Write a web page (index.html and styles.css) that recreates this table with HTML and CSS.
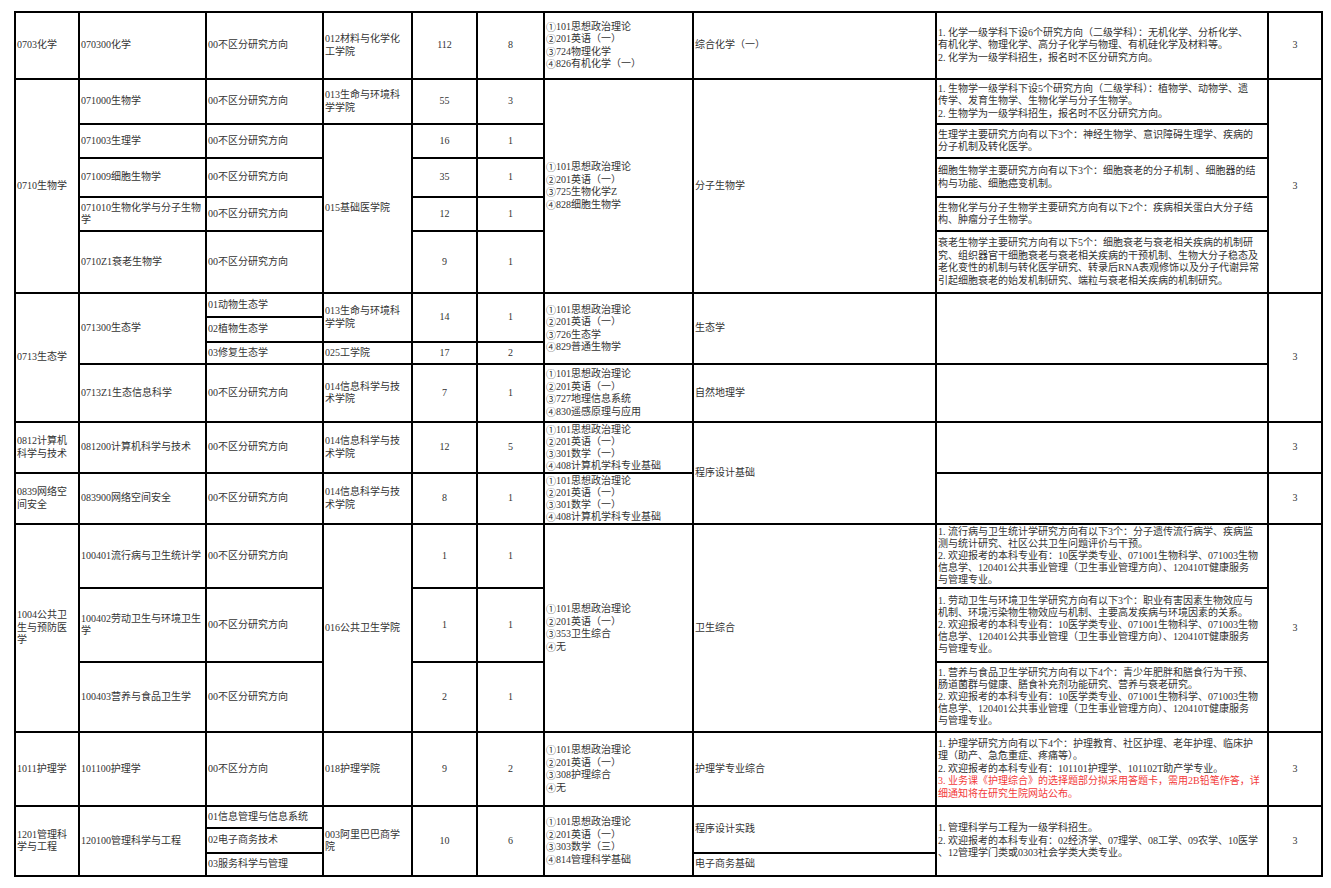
FILE: index.html
```html
<!DOCTYPE html>
<html lang="zh">
<head>
<meta charset="utf-8">
<title>招生目录</title>
<link rel="stylesheet" href="styles.css">
</head>
<body>
<table class="cat">
<colgroup>
<col class="w1"><col class="w2"><col class="w3"><col class="w4"><col class="w5"><col class="w6"><col class="w7"><col class="w8"><col class="w9"><col class="w10">
</colgroup>
<tbody>
<tr class="h1">
<td>0703化学</td>
<td>070300化学</td>
<td>00不区分研究方向</td>
<td>012材料与化学化<br>工学院</td>
<td class="c">112</td>
<td class="c">8</td>
<td><span class="n">①</span>101思想政治理论<br><span class="n">②</span>201英语（一）<br><span class="n">③</span>724物理化学<br><span class="n">④</span>826有机化学（一）</td>
<td>综合化学（一）</td>
<td class="rm">1. 化学一级学科下设6个研究方向（二级学科）：无机化学、分析化学、<br>有机化学、物理化学、高分子化学与物理、有机硅化学及材料等。<br>2. 化学为一级学科招生，报名时不区分研究方向。</td>
<td class="c">3</td>
</tr>
<tr class="h2">
<td rowspan="5">0710生物学</td>
<td>071000生物学</td>
<td>00不区分研究方向</td>
<td>013生命与环境科<br>学学院</td>
<td class="c">55</td>
<td class="c">3</td>
<td rowspan="5"><span class="n">①</span>101思想政治理论<br><span class="n">②</span>201英语（一）<br><span class="n">③</span>725生物化学Z<br><span class="n">④</span>828细胞生物学</td>
<td rowspan="5">分子生物学</td>
<td class="rm">1. 生物学一级学科下设5个研究方向（二级学科）：植物学、动物学、遗<br>传学、发育生物学、生物化学与分子生物学。<br>2. 生物学为一级学科招生，报名时不区分研究方向。</td>
<td class="c" rowspan="5">3</td>
</tr>
<tr class="h3">
<td>071003生理学</td>
<td>00不区分研究方向</td>
<td rowspan="4">015基础医学院</td>
<td class="c">16</td>
<td class="c">1</td>
<td class="rm">生理学主要研究方向有以下3个：神经生物学、意识障碍生理学、疾病的<br>分子机制及转化医学。</td>
</tr>
<tr class="h4">
<td>071009细胞生物学</td>
<td>00不区分研究方向</td>
<td class="c">35</td>
<td class="c">1</td>
<td class="rm">细胞生物学主要研究方向有以下3个：细胞衰老的分子机制 、细胞器的结<br>构与功能、细胞癌变机制。</td>
</tr>
<tr class="h5">
<td>071010生物化学与分子生物<br>学</td>
<td>00不区分研究方向</td>
<td class="c">12</td>
<td class="c">1</td>
<td class="rm">生物化学与分子生物学主要研究方向有以下2个：疾病相关蛋白大分子结<br>构、肿瘤分子生物学。</td>
</tr>
<tr class="h6">
<td>0710Z1衰老生物学</td>
<td>00不区分研究方向</td>
<td class="c">9</td>
<td class="c">1</td>
<td class="rm">衰老生物学主要研究方向有以下5个：细胞衰老与衰老相关疾病的机制研<br>究、组织器官干细胞衰老与衰老相关疾病的干预机制、生物大分子稳态及<br>老化变性的机制与转化医学研究、转录后RNA表观修饰以及分子代谢异常<br>引起细胞衰老的始发机制研究、端粒与衰老相关疾病的机制研究。</td>
</tr>
<tr class="h7">
<td rowspan="4">0713生态学</td>
<td rowspan="3">071300生态学</td>
<td>01动物生态学</td>
<td rowspan="2">013生命与环境科<br>学学院</td>
<td class="c" rowspan="2">14</td>
<td class="c" rowspan="2">1</td>
<td rowspan="3"><span class="n">①</span>101思想政治理论<br><span class="n">②</span>201英语（一）<br><span class="n">③</span>726生态学<br><span class="n">④</span>829普通生物学</td>
<td rowspan="3">生态学</td>
<td class="rm" rowspan="3"></td>
<td class="c" rowspan="4">3</td>
</tr>
<tr class="h8">
<td>02植物生态学</td>
</tr>
<tr class="h9">
<td>03修复生态学</td>
<td>025工学院</td>
<td class="c">17</td>
<td class="c">2</td>
</tr>
<tr class="h10">
<td>0713Z1生态信息科学</td>
<td>00不区分研究方向</td>
<td>014信息科学与技<br>术学院</td>
<td class="c">7</td>
<td class="c">1</td>
<td><span class="n">①</span>101思想政治理论<br><span class="n">②</span>201英语（一）<br><span class="n">③</span>727地理信息系统<br><span class="n">④</span>830遥感原理与应用</td>
<td>自然地理学</td>
<td class="rm"></td>
</tr>
<tr class="h11">
<td>0812计算机<br>科学与技术</td>
<td>081200计算机科学与技术</td>
<td>00不区分研究方向</td>
<td>014信息科学与技<br>术学院</td>
<td class="c">12</td>
<td class="c">5</td>
<td class="top"><div class="clip"><span class="n">①</span>101思想政治理论<br><span class="n">②</span>201英语（一）<br><span class="n">③</span>301数学（一）<br><span class="n">④</span>408计算机学科专业基础</div></td>
<td rowspan="2">程序设计基础</td>
<td class="rm"></td>
<td class="c">3</td>
</tr>
<tr class="h12">
<td>0839网络空<br>间安全</td>
<td>083900网络空间安全</td>
<td>00不区分研究方向</td>
<td>014信息科学与技<br>术学院</td>
<td class="c">8</td>
<td class="c">1</td>
<td class="top"><div class="clip"><span class="n">①</span>101思想政治理论<br><span class="n">②</span>201英语（一）<br><span class="n">③</span>301数学（一）<br><span class="n">④</span>408计算机学科专业基础</div></td>
<td class="rm"></td>
<td class="c">3</td>
</tr>
<tr class="h13">
<td rowspan="3">1004公共卫<br>生与预防医<br>学</td>
<td>100401流行病与卫生统计学</td>
<td>00不区分研究方向</td>
<td rowspan="3">016公共卫生学院</td>
<td class="c">1</td>
<td class="c">1</td>
<td rowspan="3"><span class="n">①</span>101思想政治理论<br><span class="n">②</span>201英语（一）<br><span class="n">③</span>353卫生综合<br><span class="n">④</span>无</td>
<td rowspan="3">卫生综合</td>
<td class="rm tight">1. 流行病与卫生统计学研究方向有以下3个：分子遗传流行病学、疾病监<br>测与统计研究、社区公共卫生问题评价与干预。<br>2. 欢迎报考的本科专业有：10医学类专业、071001生物科学、071003生物<br>信息学、120401公共事业管理（卫生事业管理方向）、120410T健康服务<br>与管理专业。</td>
<td class="c" rowspan="3">3</td>
</tr>
<tr class="h14">
<td>100402劳动卫生与环境卫生<br>学</td>
<td>00不区分研究方向</td>
<td class="c">1</td>
<td class="c">1</td>
<td class="rm tight">1. 劳动卫生与环境卫生学研究方向有以下3个：职业有害因素生物效应与<br>机制、环境污染物生物效应与机制、主要高发疾病与环境因素的关系。<br>2. 欢迎报考的本科专业有：10医学类专业、071001生物科学、071003生物<br>信息学、120401公共事业管理（卫生事业管理方向）、120410T健康服务<br>与管理专业。</td>
</tr>
<tr class="h15">
<td>100403营养与食品卫生学</td>
<td>00不区分研究方向</td>
<td class="c">2</td>
<td class="c">1</td>
<td class="rm tight">1. 营养与食品卫生学研究方向有以下4个：青少年肥胖和膳食行为干预、<br>肠道菌群与健康、膳食补充剂功能研究、营养与衰老研究。<br>2. 欢迎报考的本科专业有：10医学类专业、071001生物科学、071003生物<br>信息学、120401公共事业管理（卫生事业管理方向）、120410T健康服务<br>与管理专业。</td>
</tr>
<tr class="h16">
<td>1011护理学</td>
<td>101100护理学</td>
<td>00不区分方向</td>
<td>018护理学院</td>
<td class="c">9</td>
<td class="c">2</td>
<td><span class="n">①</span>101思想政治理论<br><span class="n">②</span>201英语（一）<br><span class="n">③</span>308护理综合<br><span class="n">④</span>无</td>
<td>护理学专业综合</td>
<td class="rm">1. 护理学研究方向有以下4个：护理教育、社区护理、老年护理、临床护<br>理（助产、急危重症、疼痛等）。<br>2. 欢迎报考的本科专业有：101101护理学、101102T助产学专业。<br><span class="red">3. 业务课《护理综合》的选择题部分拟采用答题卡，需用2B铅笔作答，详<br>细通知将在研究生院网站公布。</span></td>
<td class="c">3</td>
</tr>
<tr class="h17">
<td rowspan="3">1201管理科<br>学与工程</td>
<td rowspan="3">120100管理科学与工程</td>
<td>01信息管理与信息系统</td>
<td rowspan="3">003阿里巴巴商学<br>院</td>
<td class="c" rowspan="3">10</td>
<td class="c" rowspan="3">6</td>
<td rowspan="3"><span class="n">①</span>101思想政治理论<br><span class="n">②</span>201英语（一）<br><span class="n">③</span>303数学（三）<br><span class="n">④</span>814管理科学基础</td>
<td rowspan="2">程序设计实践</td>
<td class="rm" rowspan="3">1. 管理科学与工程为一级学科招生。<br>2. 欢迎报考的本科专业有：02经济学、07理学、08工学、09农学、10医学<br>、12管理学门类或0303社会学类大类专业。</td>
<td class="c" rowspan="3">3</td>
</tr>
<tr class="h18">
<td>02电子商务技术</td>
</tr>
<tr class="h19">
<td>03服务科学与管理</td>
<td>电子商务基础</td>
</tr>
</tbody>
</table>
</body>
</html>
```
FILE: styles.css
```css
html, body {
  margin: 0;
  padding: 0;
  background: #ffffff;
}
body {
  font-family: "Liberation Serif", "Noto Sans CJK SC", serif;
  font-size: 10px;
  color: #333333;
}
.cat {
  border-collapse: collapse;
  table-layout: fixed;
  width: 1307px;
  margin: 11px 0 0 14px;
}
.cat td {
  border: 2px solid #000000;
  padding: 0 1px;
  vertical-align: middle;
  text-align: left;
  line-height: 12.5px;
  white-space: nowrap;
  overflow: hidden;
}
.cat td.c {
  text-align: center;
}
.cat td.tight {
  line-height: 12px;
}
.cat td.top {
  vertical-align: top;
}
.clip {
  height: 49px;
  line-height: 12px;
  padding-top: 1px;
  box-sizing: border-box;
}
.n {
  font-family: "Noto Sans CJK SC", sans-serif;
  font-size: 10px;
  display: inline-block;
  width: 10px;
  text-align: center;
  vertical-align: top;
}
.red {
  color: #f23a3a;
}
.w1 { width: 64px; }
.w2 { width: 127px; }
.w3 { width: 117px; }
.w4 { width: 89px; }
.w5 { width: 65px; }
.w6 { width: 67px; }
.w7 { width: 149px; }
.w8 { width: 243px; }
.w9 { width: 332px; }
.w10 { width: 54px; }
.h1 { height: 67px; }
.h2 { height: 45px; }
.h3 { height: 34px; }
.h4 { height: 39px; }
.h5 { height: 34px; }
.h6 { height: 62px; }
.h7 { height: 24px; }
.h8 { height: 25px; }
.h9 { height: 22px; }
.h10 { height: 58px; }
.h11 { height: 51px; }
.h12 { height: 51px; }
.h13 { height: 64px; }
.h14 { height: 74px; }
.h15 { height: 70px; }
.h16 { height: 74px; }
.h17 { height: 22px; }
.h18 { height: 25px; }
.h19 { height: 23px; }
```
